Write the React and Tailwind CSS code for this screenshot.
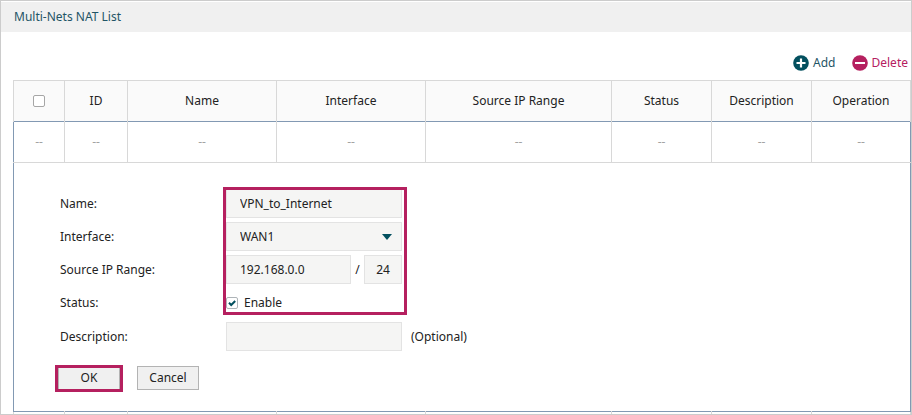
import React, { useState } from 'react';

const columns = ['ID', 'Name', 'Interface', 'Source IP Range', 'Status', 'Description', 'Operation'];

const fieldClass = 'h-[29px] border border-[#e3e3e3] bg-[#f5f5f4] outline-none';

const AddIcon = () => (
  <svg viewBox="0 0 16 16" className="h-4 w-4" aria-hidden="true">
    <circle cx="8" cy="8" r="7.8" fill="#03505f" />
    <path d="M3.5 8h9M8 3.5v9" stroke="#fff" strokeWidth="2.2" />
  </svg>
);

const DeleteIcon = () => (
  <svg viewBox="0 0 16 16" className="h-4 w-4" aria-hidden="true">
    <circle cx="8" cy="8" r="7.8" fill="#b5205f" />
    <path d="M3 8h10" stroke="#fff" strokeWidth="2" />
  </svg>
);

const FormRow = ({ label, htmlFor, children }) => (
  <div className="flex h-[29px] items-center">
    <label htmlFor={htmlFor} className="w-[166px] shrink-0">
      {label}
    </label>
    {children}
  </div>
);

const NatForm = () => {
  const [name, setName] = useState('VPN_to_Internet');
  const [iface, setIface] = useState('WAN1');
  const [ip, setIp] = useState('192.168.0.0');
  const [mask, setMask] = useState('24');
  const [enabled, setEnabled] = useState(true);
  const [description, setDescription] = useState('');

  return (
    <form className="pt-[26px] pb-[21px] pl-[46px] text-left" onSubmit={(e) => e.preventDefault()}>
      <div className="relative flex flex-col gap-1">
        <FormRow label="Name:" htmlFor="name">
          <input id="name" value={name} onChange={(e) => setName(e.target.value)} className={`${fieldClass} w-44 px-[13px]`} />
        </FormRow>
        <FormRow label="Interface:" htmlFor="interface">
          <div className="relative">
            <select
              id="interface"
              value={iface}
              onChange={(e) => setIface(e.target.value)}
              className={`${fieldClass} w-44 appearance-none px-[13px]`}
            >
              <option>WAN1</option>
            </select>
            <svg viewBox="0 0 10 6" className="pointer-events-none absolute top-3 right-2.5 h-1.5 w-2.5" aria-hidden="true">
              <path d="M0 0h10L5 6z" fill="#03505f" />
            </svg>
          </div>
        </FormRow>
        <FormRow label="Source IP Range:" htmlFor="ip">
          <input id="ip" value={ip} onChange={(e) => setIp(e.target.value)} className={`${fieldClass} w-[125px] px-[13px]`} />
          <span className="w-[13px] text-center">/</span>
          <input
            aria-label="Subnet mask"
            value={mask}
            onChange={(e) => setMask(e.target.value)}
            className={`${fieldClass} w-[38px] text-center`}
          />
        </FormRow>
        <FormRow label="Status:" htmlFor="enable">
          <span className="relative h-3 w-3">
            <input
              id="enable"
              type="checkbox"
              checked={enabled}
              onChange={(e) => setEnabled(e.target.checked)}
              className="block h-3 w-3 appearance-none rounded-xs border border-[#aeb4b8] bg-white"
            />
            {enabled && (
              <svg viewBox="0 0 12 12" className="pointer-events-none absolute inset-0 h-3 w-3" aria-hidden="true">
                <path d="M3 5.8l2.2 2.2L9.2 4" fill="none" stroke="#03505f" strokeWidth="2" />
              </svg>
            )}
          </span>
          <label htmlFor="enable" className="pl-1.5">
            Enable
          </label>
        </FormRow>
        {/* highlight around the required settings */}
        <div className="pointer-events-none absolute -top-0.5 bottom-0.5 left-[163px] w-[184px] border-3 border-[#b5205f]" />
      </div>
      <div className="mt-[5px]">
        <FormRow label="Description:" htmlFor="description">
          <input
            id="description"
            value={description}
            onChange={(e) => setDescription(e.target.value)}
            className={`${fieldClass} w-44 px-[13px]`}
          />
          <span className="pl-[9px]">(Optional)</span>
        </FormRow>
      </div>
      <div className="mt-[15px] -ml-0.5 flex gap-[17px]">
        <div className="relative">
          <button type="submit" className="block h-6 w-[62px] border border-[#b3b3b3] bg-[#f0f0f0]">
            OK
          </button>
          <div className="pointer-events-none absolute -inset-x-[3px] -top-px -bottom-0.5 border-3 border-[#b5205f]" />
        </div>
        <button type="button" className="h-6 w-[62px] border border-[#b3b3b3] bg-[#f0f0f0]">
          Cancel
        </button>
      </div>
    </form>
  );
};

const App = () => {
  return (
    <div className="border border-[#cccccc] bg-white font-['Noto_Sans',sans-serif] text-xs text-[#222222]">
      <h1 className="mt-px flex h-[30px] items-center bg-[#f0f0f0] pl-[13px] text-[#1f5566]">Multi-Nets NAT List</h1>

      <div className="flex h-12 items-end justify-end gap-4 pr-[3px] pb-[9px]">
        <button type="button" className="flex items-center gap-1 text-[#1f5566]">
          <AddIcon /> Add
        </button>
        <button type="button" className="flex items-center gap-1 text-[#b5205f]">
          <DeleteIcon /> Delete
        </button>
      </div>

      <div className="pr-px pl-3">
        <table className="w-full table-fixed border-collapse text-center">
          <colgroup>
            <col className="w-[51px]" />
            <col className="w-[63px]" />
            <col className="w-[149px]" />
            <col className="w-[149px]" />
            <col className="w-[186px]" />
            <col className="w-[100px]" />
            <col className="w-[100px]" />
            <col className="w-[99px]" />
          </colgroup>
          <thead className="border-x border-t border-[#d8d8d8] bg-[#fafafa]">
            <tr className="h-[41px]">
              <th className="font-normal">
                <input
                  type="checkbox"
                  aria-label="Select all"
                  className="mx-auto block h-3 w-3 appearance-none rounded-xs border border-[#a6a6a6] bg-white"
                />
              </th>
              {columns.map((column) => (
                <th key={column} className="border-l border-[#d8d8d8] font-normal">
                  {column}
                </th>
              ))}
            </tr>
          </thead>
          <tbody className="border border-[#8299b3]">
            <tr className="h-[41px] text-[#a3a3a3]">
              <td>--</td>
              {columns.map((column) => (
                <td key={column} className="border-l border-[#d8d8d8]">
                  --
                </td>
              ))}
            </tr>
            <tr>
              <td colSpan={8} className="border-t border-[#d8d8d8]">
                <NatForm />
              </td>
            </tr>
          </tbody>
          <tfoot className="border-x border-[#d8d8d8]">
            <tr className="h-0.5">
              <td />
              {columns.map((column) => (
                <td key={column} className="border-l border-[#d8d8d8]" />
              ))}
            </tr>
          </tfoot>
        </table>
      </div>
    </div>
  );
};

export default App;
